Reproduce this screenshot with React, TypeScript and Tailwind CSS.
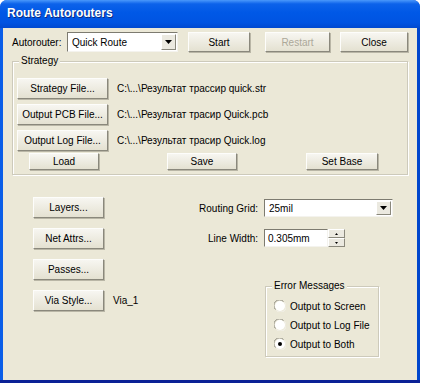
import React from 'react';

const btn =
  'flex items-center justify-center bg-gradient-to-b from-[#f7f6f1] to-[#e4e1d1] border border-t-[#fdfdfb] border-l-[#fdfdfb] border-r-[#8a887c] border-b-[#8a887c] shadow-[1px_1px_0_#b9b6a6]';

function Button({ label, className = '', disabled = false }: { label: string; className?: string; disabled?: boolean }) {
  return (
    <div className={`${btn} ${className} ${disabled ? 'text-[#aca899]' : 'text-black'}`}>{label}</div>
  );
}

function Arrow() {
  return (
    <svg width="7" height="4" viewBox="0 0 7 4">
      <path d="M0 0h7L3.5 4z" fill="#000" />
    </svg>
  );
}

function Combo({ value, className = '' }: { value: string; className?: string }) {
  return (
    <div className={`flex bg-white border border-t-[#7d7b70] border-l-[#7d7b70] border-r-[#f4f3ee] border-b-[#f4f3ee] ${className}`}>
      <div className="flex-1 flex items-center pl-[4px] truncate">{value}</div>
      <div className="w-[15px] m-[1px] flex items-center justify-center bg-[#ebe9e0] border border-t-white border-l-white border-r-[#8a887c] border-b-[#8a887c]">
        <Arrow />
      </div>
    </div>
  );
}

function Radio({ checked }: { checked?: boolean }) {
  return (
    <svg width="12" height="12" viewBox="0 0 12 12">
      <circle cx="6" cy="6" r="5" fill="#fff" />
      <path d="M1.5 9.5A5 5 0 0 1 9.5 1.5" fill="none" stroke="#8d8b80" strokeWidth="1" />
      <path d="M10.5 2.5A5 5 0 0 1 2.5 10.5" fill="none" stroke="#f2f1ea" strokeWidth="1" />
      {checked && <circle cx="6" cy="6" r="2" fill="#000" />}
    </svg>
  );
}

function Group({ title, className = '', children }: { title: string; className?: string; children: React.ReactNode }) {
  return (
    <div className={`relative border border-[#cdcabb] shadow-[inset_1px_1px_0_#fff,1px_1px_0_#fff] ${className}`}>
      <span className="absolute -top-[7px] left-[6px] px-[2px] bg-[#ebe8d7] leading-[12px]">{title}</span>
      {children}
    </div>
  );
}

export default function App() {
  const files = [
    ['Strategy File...', 'C:\\...\\Результат трассир quick.str'],
    ['Output PCB File...', 'C:\\...\\Результат трасир Quick.pcb'],
    ['Output Log File...', 'C:\\...\\Результат трасир Quick.log'],
  ];

  return (
    <div className="w-[422px] h-[385px] bg-white font-['Liberation_Sans',Arial,sans-serif] text-[10px] text-black">
      <div className="w-[420px] h-[383px] flex flex-col rounded-t-[7px] overflow-hidden bg-[linear-gradient(to_right,#0a5ee8,#0055e3_50%,#0046cc)]">
        <div className="h-[28px] shrink-0 pl-[7px] pt-[6px] bg-[linear-gradient(to_bottom,#4a98fb_0%,#0c62ea_14%,#0058e6_45%,#0054e2_80%,#0049d0_100%)] text-white font-bold text-[12px] leading-[14px] [text-shadow:1px_1px_0_#0a2a80]">
          Route Autorouters
        </div>
        <div className="flex-1 mx-[3px] bg-[#ebe8d7] flex flex-col">
          <div className="flex items-center pl-[9px] pt-[4px] h-[20px] box-content">
            <span className="w-[55px]">Autorouter:</span>
            <Combo value="Quick Route" className="w-[111px] h-[20px]" />
            <Button label="Start" className="ml-[10px] w-[62px] h-[20px]" />
            <Button label="Restart" disabled className="ml-[15px] w-[65px] h-[20px]" />
            <Button label="Close" className="ml-[10px] w-[68px] h-[20px]" />
          </div>

          <Group title="Strategy" className="ml-[9px] mt-[9px] w-[396px] h-[114px]">
            <div className="flex flex-col pl-[4px] pt-[16px] gap-[5px]">
              {files.map(([b, p]) => (
                <div key={b} className="flex items-center">
                  <Button label={b} className="w-[91px] h-[21px]" />
                  <span className="ml-[9px]">{p}</span>
                </div>
              ))}
            </div>
            <div className="flex mt-[2px] pl-[16px]">
              <Button label="Load" className="w-[70px] h-[17px]" />
              <Button label="Save" className="ml-[68px] w-[70px] h-[17px]" />
              <Button label="Set Base" className="ml-[69px] w-[72px] h-[17px]" />
            </div>
          </Group>

          <div className="flex mt-[22px]">
            <div className="w-[180px] pl-[30px] flex flex-col gap-[10px]">
              <Button label="Layers..." className="w-[71px] h-[21px]" />
              <Button label="Net Attrs..." className="w-[71px] h-[21px]" />
              <Button label="Passes..." className="w-[71px] h-[21px]" />
              <div className="flex items-center">
                <Button label="Via Style..." className="w-[71px] h-[21px]" />
                <span className="ml-[9px]">Via_1</span>
              </div>
            </div>
            <div className="flex flex-col pt-[2px]">
              <div className="flex items-center">
                <span className="w-[75px] text-right">Routing Grid:</span>
                <Combo value="25mil" className="ml-[6px] w-[129px] h-[18px]" />
              </div>
              <div className="flex items-center mt-[12px]">
                <span className="w-[75px] text-right">Line Width:</span>
                <div className="ml-[6px] w-[64px] h-[18px] flex items-center pl-[3px] bg-white border border-t-[#7d7b70] border-l-[#7d7b70] border-r-[#f4f3ee] border-b-[#f4f3ee]">
                  0.305mm
                </div>
                <div className="w-[17px] h-[18px] flex flex-col">
                  <div className="flex-1 flex items-center justify-center bg-[#ebe9e0] border border-t-white border-l-white border-r-[#8a887c] border-b-[#8a887c]">
                    <svg width="3" height="2" viewBox="0 0 3 2"><path d="M0 2h3L1.5 0z" fill="#000" /></svg>
                  </div>
                  <div className="flex-1 flex items-center justify-center bg-[#ebe9e0] border border-t-white border-l-white border-r-[#8a887c] border-b-[#8a887c]">
                    <svg width="3" height="2" viewBox="0 0 3 2"><path d="M0 0h3L1.5 2z" fill="#000" /></svg>
                  </div>
                </div>
              </div>
              <Group title="Error Messages" className="ml-[82px] mt-[39px] w-[114px] h-[71px]">
                <div className="flex flex-col pl-[8px] pt-[13px] gap-[7px]">
                  {['Output to Screen', 'Output to Log File', 'Output to Both'].map((t, i) => (
                    <div key={t} className="flex items-center h-[12px]">
                      <Radio checked={i === 2} />
                      <span className="ml-[4px]">{t}</span>
                    </div>
                  ))}
                </div>
              </Group>
            </div>
          </div>
        </div>
        <div className="h-[3px] shrink-0 bg-[#0a2196]" />
      </div>
    </div>
  );
}
